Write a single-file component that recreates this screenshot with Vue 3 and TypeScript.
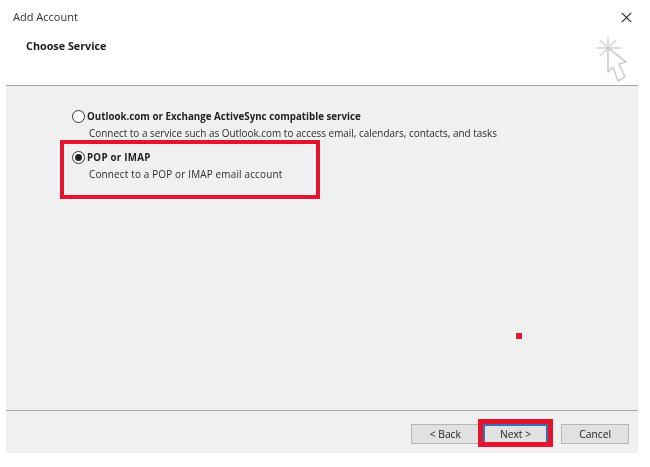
<script setup lang="ts">
const options = [
  {
    title: 'Outlook.com or Exchange ActiveSync compatible service',
    text: 'Connect to a service such as Outlook.com to access email, calendars, contacts, and tasks',
    checked: false,
  },
  { title: 'POP or IMAP', text: 'Connect to a POP or IMAP email account', checked: true },
]
</script>

<template>
  <div class="dialog">
    <header class="head">
      <div class="titlebar">
        <span class="title">Add Account</span>
        <svg class="close" width="11" height="11" viewBox="0 0 11 11" aria-label="Close">
          <path d="M.8.8l9.4 9.4M10.2.8L.8 10.2" stroke="#222" stroke-width="1.1" fill="none" />
        </svg>
      </div>
      <div class="subhead">
        <h1 class="heading">Choose Service</h1>
        <svg class="wizard" width="34" height="48" viewBox="0 0 34 48">
          <g stroke="#d4d4d4" stroke-width="1.6" fill="none">
            <path d="M13 2v22M2 13h24M5 5l16 16M21 5L5 21" />
          </g>
          <path
            d="M13 13v24l5-5 5 14 7-4-6-13 7-2z"
            fill="#fff"
            stroke="#cfcfcf"
            stroke-width="1.6"
            stroke-linejoin="round"
          />
        </svg>
      </div>
    </header>

    <main class="body">
      <div class="options">
        <div v-for="o in options" :key="o.title" class="option" :class="{ marked: o.checked }">
          <div class="line">
            <span class="radio" :class="{ on: o.checked }"></span>
            <span class="label">{{ o.title }}</span>
          </div>
          <p class="desc">{{ o.text }}</p>
        </div>
      </div>
      <span class="dot"></span>
    </main>

    <footer class="foot">
      <button class="btn back" type="button">&lt; Back</button>
      <button class="btn next" type="button">Next &gt;</button>
      <button class="btn cancel" type="button">Cancel</button>
    </footer>
  </div>
</template>

<style>
html,
body {
  margin: 0;
  background: #fff;
}
</style>

<style scoped>
.dialog {
  width: 650px;
  height: 467px;
  background: #fff;
  font-family: "Open Sans", "Noto Sans", sans-serif;
  font-size: 9.93px;
  color: #222;
  overflow: hidden;
  filter: blur(0.3px);
}
.head {
  height: 85px;
  margin-left: 6px;
  width: 632px;
  border-bottom: 1px solid #a6a6a6;
  box-sizing: content-box;
}
.titlebar {
  display: flex;
  justify-content: space-between;
  align-items: center;
  height: 34px;
  padding: 0 0 0 7px;
  position: relative;
}
.title {
  font-size: 11px;
  color: #333;
  margin-bottom: 2px;
}
.close {
  margin-right: 6px;
  margin-top: 1px;
}
.subhead {
  display: flex;
  justify-content: space-between;
  padding-left: 20px;
}
.heading {
  margin: 0;
  font-size: 10.8px;
  font-weight: 700;
  line-height: 24px;
  color: #1a1a1a;
}
.wizard {
  margin-right: 9px;
  margin-top: 1px;
}
.body {
  position: relative;
  margin-left: 6px;
  width: 632px;
  height: 325px;
  background: #f0f0f0;
  box-sizing: border-box;
  padding-top: 22px;
  border-bottom: 1px solid #a9a9a9;
}
.options {
  padding-left: 66px;
}
.option {
  position: relative;
  height: 41px;
}
.marked::after {
  content: "";
  position: absolute;
  left: -12px;
  top: -9px;
  width: 260px;
  height: 59px;
  box-sizing: border-box;
  border: 4px solid #e5132b;
}
.marked .label {
  letter-spacing: 0.25px;
}
.marked .desc {
  letter-spacing: 0.17px;
}
.line {
  display: flex;
  align-items: center;
  gap: 2px;
  height: 16px;
}
.radio {
  width: 13px;
  height: 13px;
  box-sizing: border-box;
  border: 1px solid #333;
  border-radius: 50%;
  background: #fff;
  position: relative;
}
.radio.on::after {
  content: "";
  position: absolute;
  inset: 2px;
  border-radius: 50%;
  background: #222;
}
.label {
  font-size: 9.75px;
  font-weight: 700;
  color: #222;
}
.desc {
  margin: 1px 0 0;
  padding-left: 17px;
  line-height: 17px;
  color: #2b2b2b;
}
.dot {
  position: absolute;
  left: 510px;
  top: 247px;
  width: 6px;
  height: 6px;
  background: #e5132b;
}
.foot {
  margin-left: 6px;
  width: 632px;
  height: 42px;
  background: #f0f0f0;
  box-sizing: border-box;
  padding: 13px 9px 0 405px;
  display: flex;
  align-items: flex-start;
}
.btn {
  height: 20px;
  padding: 0;
  border: 1px solid #b5b5b5;
  background: #e1e1e1;
  font: inherit;
  font-size: 10.3px;
  color: #222;
}
.back {
  width: 69px;
}
.next {
  width: 66px;
  margin-left: 3px;
  border: 2px solid #3c6db5;
  position: relative;
}
.next::after {
  content: "";
  position: absolute;
  left: -7px;
  top: -7px;
  width: 75px;
  height: 28px;
  box-sizing: border-box;
  border: 5px solid #e5132b;
}
.cancel {
  width: 68px;
  margin-left: 13px;
}
</style>
